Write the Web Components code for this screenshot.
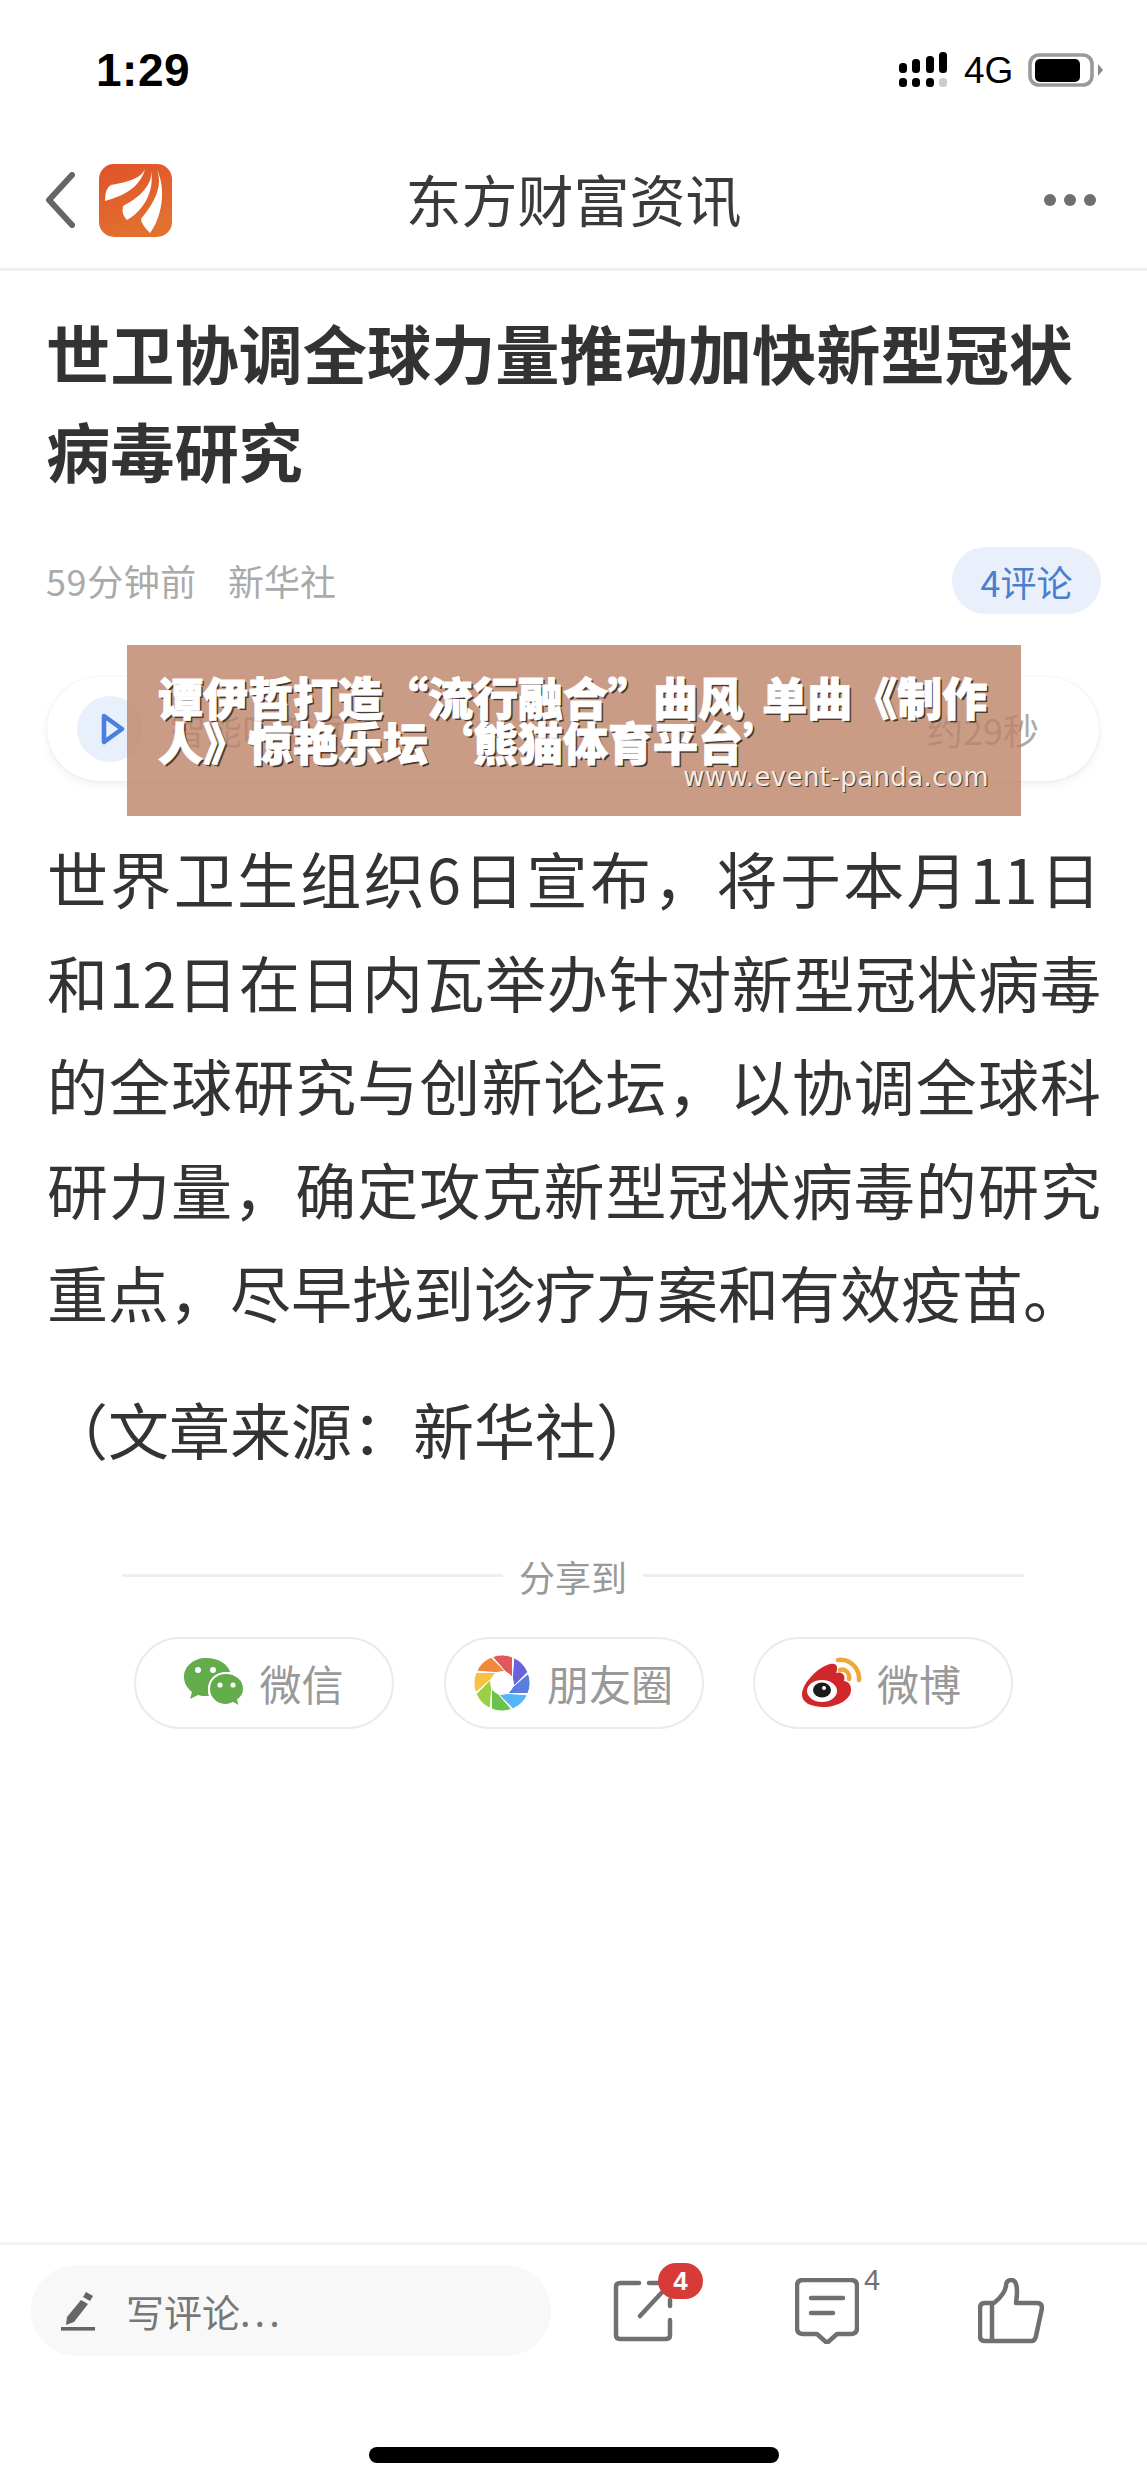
<!DOCTYPE html>
<html lang="zh"><head><meta charset="utf-8"><title>东方财富资讯</title>
<style>
html,body{margin:0;padding:0;background:#fff}
body{width:1147px;height:2484px;overflow:hidden;font-family:"Noto Sans CJK SC","Noto Sans",sans-serif;color:#333}
news-page{display:flex;flex-direction:column;height:2484px;position:relative}
</style></head><body>
<news-page>
  <status-bar></status-bar>
  <nav-bar>东方财富资讯</nav-bar>
  <article-head heading="世卫协调全球力量推动加快新型冠状病毒研究" time="59分钟前" source="新华社" comments="4评论"></article-head>
  <audio-pill label="智能听新闻" duration="约29秒"></audio-pill>
  <article-body>
    <span>世界卫生组织6日宣布，将于本月11日</span>
    <span>和12日在日内瓦举办针对新型冠状病毒</span>
    <span>的全球研究与创新论坛，以协调全球科</span>
    <span>研力量，确定攻克新型冠状病毒的研究</span>
    <span class="last">重点，尽早找到诊疗方案和有效疫苗。</span>
  </article-body>
  <share-panel></share-panel>
  <bottom-bar></bottom-bar>
  <promo-banner></promo-banner>
</news-page>
<script>
function def(name, css, html, setup){
  customElements.define(name, class extends HTMLElement{
    constructor(){super();const s=this.attachShadow({mode:'open'});
      s.innerHTML='<style>'+css+'</style>'+(typeof html==='function'?html(this):html);}
    connectedCallback(){const s=this.shadowRoot;
      if(typeof setup==='function')setup(this,s);}
  });
}

def('status-bar',`
:host{display:flex;align-items:flex-start;height:164px;flex:none;box-sizing:border-box;padding:44px 44px 0 96px;font-family:"Liberation Sans",sans-serif;color:#000}
.t{font-size:46px;font-weight:700;line-height:52px;letter-spacing:.5px}
.r{margin-left:auto;display:flex;align-items:center;height:52px;margin-top:0;gap:15px}
.g{font-size:37px;line-height:40px;margin-top:2px;width:49px;white-space:nowrap}
svg{display:block}
`,`<div class="t">1:29</div><div class="r">
<svg width="50" height="36" viewBox="0 0 50 36"><g fill="#000">
<rect x="0" y="26" width="8" height="9" rx="3.5"/><rect x="0" y="11" width="8" height="10" rx="3.5"/>
<rect x="13" y="26" width="8" height="9" rx="3.5"/><rect x="13" y="7" width="8" height="14" rx="3.5"/>
<rect x="27" y="26" width="8" height="9" rx="3.5"/><rect x="27" y="4" width="8" height="17" rx="3.5"/>
<rect x="40" y="0" width="8" height="21" rx="3.5"/></g><rect x="40" y="26" width="8" height="9" rx="3.5" fill="#ccc"/></svg>
<span class="g">4G</span>
<svg width="75" height="34" viewBox="0 0 75 34"><rect x="2" y="2" width="62" height="30" rx="9" fill="none" stroke="#999" stroke-width="3.6"/><rect x="7" y="6" width="45" height="23" rx="5" fill="#000"/><path d="M70 11l5 6-5 6z" fill="#888"/></svg>
</div>`);

def('nav-bar',`
:host{display:flex;align-items:center;height:108px;flex:none;box-sizing:border-box;padding:0 51px 31px 45px;border-bottom:3px solid #f0f0f0;position:relative;margin-top:-1px}
.l{display:flex;align-items:center;gap:24px;width:200px}
.m{position:absolute;left:0;right:0;text-align:center;font-size:56px;line-height:60px;color:#3a3a3a;top:5px}
.d{margin-left:auto;display:flex;gap:8px}
.d i{width:12px;height:12px;border-radius:50%;background:#6e6e6e;display:block}
svg{display:block}
`,`<div class="l"><svg width="30" height="56" viewBox="0 0 30 56"><path d="M27 3L4 28l23 25" fill="none" stroke="#666" stroke-width="6" stroke-linecap="round" stroke-linejoin="round"/></svg>
<svg width="73" height="73" viewBox="0 0 73 73"><defs><linearGradient id="g" x1="0" y1="0" x2=".4" y2="1"><stop offset="0" stop-color="#e0512a"/><stop offset="1" stop-color="#e2712f"/></linearGradient></defs><rect width="73" height="73" rx="15" fill="url(#g)"/>
<g fill="#fff"><path d="M46 5C42 14 30 18 12 21Q6 24 6 37C24 32 41 24 46 5Z"/><path d="M52 6C54 18 44 32 24 42Q22 50 28 56C44 47 56 28 52 6Z"/><path d="M58 6C64 22 56 38 42 55Q42 60 51 69C62 55 68 26 58 6Z"/></g></svg></div>
<div class="m"><slot></slot></div><div class="d"><i></i><i></i><i></i></div>`);

def('article-head',`
:host{display:block;flex:none;padding:0 46px 0 46px}
h1{margin:0;font-size:64.2px;line-height:98px;font-weight:700;color:#333;padding-top:31px}
.meta{display:flex;align-items:center;height:67px;margin-top:49px;font-size:36px;color:#aaa;gap:31px}
.meta span{position:relative;top:-1px}
.meta span:first-child{letter-spacing:.6px}
.b{margin-left:auto;width:149px;height:67px;border-radius:34px;background:#e9f0fb;color:#4a7fd0;display:flex;align-items:center;justify-content:center;top:0 !important}
`,h=>`<h1>${h.getAttribute('heading')}</h1><div class="meta"><span>${h.getAttribute('time')}</span><span>${h.getAttribute('source')}</span><span class="b">${h.getAttribute('comments')}</span></div>`);

def('audio-pill',`
:host{display:flex;align-items:center;flex:none;height:104px;box-sizing:border-box;margin:63px 48px 0 47px;border-radius:52px;background:#fff;box-shadow:0 4px 10px rgba(0,0,0,.06),0 0 2px rgba(0,0,0,.1);padding:0 60px 0 30px;font-size:36px;color:#aaa}
.c{width:66px;height:66px;border-radius:50%;background:#e8f0fb;display:flex;align-items:center;justify-content:center;margin-right:27px;padding-left:0}
.c svg{margin-left:6px}
.e{margin-left:auto;}
svg{display:block}
`,h=>`<span class="c"><svg width="24" height="32" viewBox="0 0 24 32"><path d="M3 3L21 16 3 29Z" fill="none" stroke="#4a80e0" stroke-width="4.6" stroke-linejoin="round"/></svg></span><span>${h.getAttribute('label')}</span><span class="e">${h.getAttribute('duration')}</span>`);

def('article-body',`
:host{display:block;flex:none;margin-top:45px;padding:0 46px 0 47px;font-size:61px;line-height:103.6px;color:#333}
.ln ::slotted(span){display:block;text-align:justify;text-align-last:justify}
.ln ::slotted(span.last){text-align-last:left}
p{margin:0;padding-top:33px}
`,`<div class="ln"><slot></slot></div><p>（文章来源：新华社）</p>`);

def('share-btn',`
:host{display:flex;align-items:center;justify-content:center;gap:15px;width:260px;height:92px;box-sizing:border-box;border:2px solid #ebebeb;border-radius:46px;font-size:42px;color:#999;background:#fff}
::slotted(svg){display:block}
`,`<slot name="i"></slot><slot></slot>`);

def('share-panel',`
:host{display:block;flex:none;margin-top:70px}
.h{display:flex;align-items:center;justify-content:center;padding:0 123px 0 122px;font-size:36px;line-height:50px;color:#999;gap:16px}
.h i{flex:1;height:3px;background:#eee;display:block}
.r{display:flex;justify-content:space-between;padding:36px 134px 0 134px}
`,`<div class="h"><i></i><span>分享到</span><i></i></div>
<div class="r">
<share-btn><svg slot="i" width="60" height="50" viewBox="0 0 60 50"><path d="M22 0C10 0 0 8 0 19c0 6 3 11 8 15l-2 7 8-4c3 1 5 1 8 1 1 0 2 0 3 0-1-2-1-4-1-6 0-10 9-18 21-18h1C44 6 34 0 22 0z" fill="#63ac4c"/><path d="M60 31c0-9-8-16-18-16s-17 7-17 16 8 16 17 16c2 0 5-1 7-2l7 4-2-7c4-3 6-7 6-11z" fill="#63ac4c" stroke="#fff" stroke-width="2"/><circle cx="14" cy="12" r="3" fill="#fff"/><circle cx="29" cy="12" r="3" fill="#fff"/><circle cx="36" cy="27" r="2.6" fill="#fff"/><circle cx="49" cy="27" r="2.6" fill="#fff"/></svg>微信</share-btn>
<share-btn><svg slot="i" id="m" width="56" height="56" viewBox="-28 -28 56 56" style="margin-right:2px"></svg>朋友圈</share-btn>
<share-btn style="padding-right:5px"><svg slot="i" width="62" height="52" viewBox="0 0 62 52"><path d="M2 38C2 26 18 10 30 7C38 5 38 12 36 16C42 14 46 18 44 24C50 25 51 29 51 33C51 42 38 50 24 50C10 50 2 45 2 38Z" fill="#d1262a"/><ellipse cx="22" cy="34" rx="15" ry="11" fill="#fff"/><ellipse cx="22" cy="33" rx="9" ry="7.5" fill="#1c1c1c"/><circle cx="24" cy="31" r="2" fill="#fff"/><path d="M38 3C50 1 60 12 59 23M40 13C46 11 50 17 49 22" fill="none" stroke="#eea83a" stroke-width="4.5" stroke-linecap="round"/></svg>微博</share-btn>
</div>`,(h,s)=>{
  const m=s.querySelector('#m');
  const cols=['#e2585a','#6a62dc','#5a7de0','#55b5f5','#6cc24a','#9bcf45','#f5c244','#ee8a3a'];
  const p=(r,a)=>[(r*Math.sin(a*Math.PI/180)).toFixed(2),(-r*Math.cos(a*Math.PI/180)).toFixed(2)];
  let out='';
  cols.forEach((c,i)=>{
    const a=-22+i*45,b=a+45;
    const [x1,y1]=p(28,a+2),[x2,y2]=p(28,b-1),[x3,y3]=p(12,b+38),[x4,y4]=p(12,b-8);
    out+=`<path d="M${x1} ${y1}A28 28 0 0 1 ${x2} ${y2}L${x3} ${y3}L${x4} ${y4}Z" fill="${c}" stroke="#fff" stroke-width="1"/>`;
  });
  m.innerHTML=out+'<circle r="11.5" fill="#fff"/>';
});

def('bottom-bar',`
:host{display:block;position:absolute;left:0;right:0;bottom:0;height:242px;border-top:3px solid #f3f3f3;box-sizing:border-box;background:#fff}
.row{display:flex;align-items:flex-start;padding:20px 0 0 31px}
.inp{width:520px;height:91px;border-radius:46px;background:#f8f8f8;display:flex;align-items:center;padding-left:30px;box-sizing:border-box;gap:31px;font-size:38px;color:#777}
.inp b{font-weight:400;letter-spacing:4px}
.ic{position:relative;display:block}
.ic svg{display:block}
.a{margin:15px 0 0 62px}
.c{margin:13px 0 0 122px}
.l{margin:13px 0 0 119px}
.badge{position:absolute;left:45px;top:-17px;width:45px;height:36px;border-radius:18px;background:#d63b37;color:#fff;font:700 26px/36px "Liberation Sans",sans-serif;text-align:center}
.n{position:absolute;left:69px;top:-11px;font:400 29px/26px "Liberation Sans",sans-serif;color:#707070}
.h{position:absolute;left:369px;top:202px;width:410px;height:16px;border-radius:8px;background:#000}
svg{display:block}
`,`<div class="row">
<div class="inp"><svg width="34" height="40" viewBox="0 0 34 40"><path d="M25 1l7 4-3 5-7-4z M20 9l7 4-14 18-8 3 1-8z" fill="#666"/><rect x="0" y="36" width="34" height="3.6" fill="#666"/></svg><span>写评论<b>...</b></span></div>
<span class="ic a"><svg width="60" height="62" viewBox="0 0 60 62"><path d="M26 3H7Q3 3 3 7V55Q3 59 7 59H53Q57 59 57 55V40M36 3H46M57 20V26M27 36L52 9" fill="none" stroke="#707070" stroke-width="4.5" stroke-linecap="round" stroke-linejoin="round"/></svg><span class="badge">4</span></span>
<span class="ic c"><svg width="64" height="66" viewBox="0 0 64 66"><path d="M8 2H56Q62 2 62 8V50Q62 56 56 56H42L32 65 22 56H8Q2 56 2 50V8Q2 2 8 2Z" fill="none" stroke="#707070" stroke-width="4.5" stroke-linejoin="round"/><path d="M16 20H48M16 35H38" fill="none" stroke="#707070" stroke-width="4.5" stroke-linecap="round"/></svg><span class="n">4</span></span>
<span class="ic l"><svg width="66" height="66" viewBox="0 0 66 66"><path d="M14 25H7Q2 25 2 30V58Q2 63 7 63H53Q57 63 58 58L64 30Q64 25 59 25H38C39 18 40 12 38 6 36 0 28 1 28 8 27 15 21 21 16 25ZM14 25V63" fill="none" stroke="#707070" stroke-width="4.5" stroke-linejoin="round"/></svg></span>
</div><div class="h"></div>`);

def('promo-banner',`
:host{display:block;position:absolute;left:127px;top:645px;width:894px;height:171px;background:rgba(190,131,102,.8);box-sizing:border-box;padding:29px 32px 0 31px;color:#fff;text-shadow:2px 2px 0 #4a3a30;font-weight:900}
.t{font-size:45px;line-height:45px;white-space:nowrap;word-spacing:9px;-webkit-text-stroke:1px #fff}
.u{font:400 26px/27px "DejaVu Sans",sans-serif;letter-spacing:.4px;color:#f1ece7;text-align:right;margin-top:0;text-shadow:1px 1px 0 #4a3a30;white-space:nowrap}
`,`<div class="t">谭伊哲打造“流行融合”曲风 单曲《制作</div><div class="t">人》惊艳乐坛‘熊猫体育平台’</div><div class="u">www.event-panda.com</div>`);
</script>
</body></html>
